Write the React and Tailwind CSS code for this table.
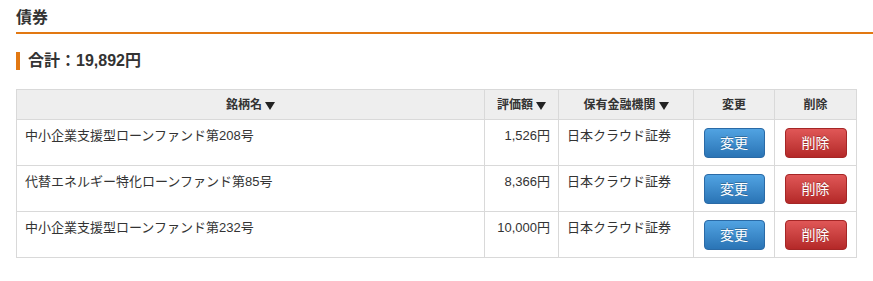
import React from 'react';

const rows = [
  { name: '中小企業支援型ローンファンド第208号', amount: '1,526円', broker: '日本クラウド証券' },
  { name: '代替エネルギー特化ローンファンド第85号', amount: '8,366円', broker: '日本クラウド証券' },
  { name: '中小企業支援型ローンファンド第232号', amount: '10,000円', broker: '日本クラウド証券' },
];

const th = 'border border-[#d9d9d9] bg-[#eeeeee] h-[30px] text-[12px] font-bold text-[#333] text-center align-middle p-0';
const td = 'border border-[#d9d9d9] h-[46px] align-top pt-[7px] text-[13px] leading-[18px] text-[#333]';

// sort marker shown after sortable column titles
const SortArrow = () => (
  <svg className="inline-block ml-[3px] align-[-1px]" width="10" height="8" viewBox="0 0 10 8">
    <path d="M0 0h10L5 8z" fill="#222" />
  </svg>
);

export default function App() {
  return (
    <div
      className="w-[873px] h-[281px] bg-white pl-4"
      style={{ fontFamily: '"Liberation Sans", "Noto Sans CJK JP", sans-serif' }}
    >
      {/* section heading */}
      <h2 className="text-[16px] font-bold leading-[22px] pt-[7px] pb-[3px] text-[#333] border-b-2 border-[#e27812]">
        債券
      </h2>

      {/* total */}
      <div className="mt-[18px] border-l-4 border-[#e27812] pl-[8px] text-[16px] font-bold leading-[18px] text-[#333]">
        合計：19,892円
      </div>

      <table className="mt-[19px] w-[840px] border-collapse table-fixed">
        <colgroup>
          <col className="w-[468px]" />
          <col className="w-[74px]" />
          <col className="w-[135px]" />
          <col className="w-[81px]" />
          <col className="w-[82px]" />
        </colgroup>
        <thead>
          <tr>
            <th className={th}>銘柄名<SortArrow /></th>
            <th className={th}>評価額<SortArrow /></th>
            <th className={th}>保有金融機関<SortArrow /></th>
            <th className={th}>変更</th>
            <th className={th}>削除</th>
          </tr>
        </thead>
        <tbody>
          {rows.map((r) => (
            <tr key={r.name}>
              <td className={`${td} pl-2`}>{r.name}</td>
              <td className={`${td} pr-2 text-right`}>{r.amount}</td>
              <td className={`${td} pl-2`}>{r.broker}</td>
              <td className="border border-[#d9d9d9] align-top pt-[8px]">
                <button className="mx-auto block w-[61px] h-[30px] rounded-[4px] border border-[#2a6aa6] bg-gradient-to-b from-[#51a3e2] to-[#2a74b5] text-white text-[14px] [text-shadow:0_-1px_0_rgba(0,0,0,0.25)]">
                  変更
                </button>
              </td>
              <td className="border border-[#d9d9d9] align-top pt-[8px]">
                <button className="mx-auto block w-[62px] h-[30px] rounded-[4px] border border-[#a52626] bg-gradient-to-b from-[#e05757] to-[#b42828] text-white text-[14px] [text-shadow:0_-1px_0_rgba(0,0,0,0.25)]">
                  削除
                </button>
              </td>
            </tr>
          ))}
        </tbody>
      </table>
    </div>
  );
}
